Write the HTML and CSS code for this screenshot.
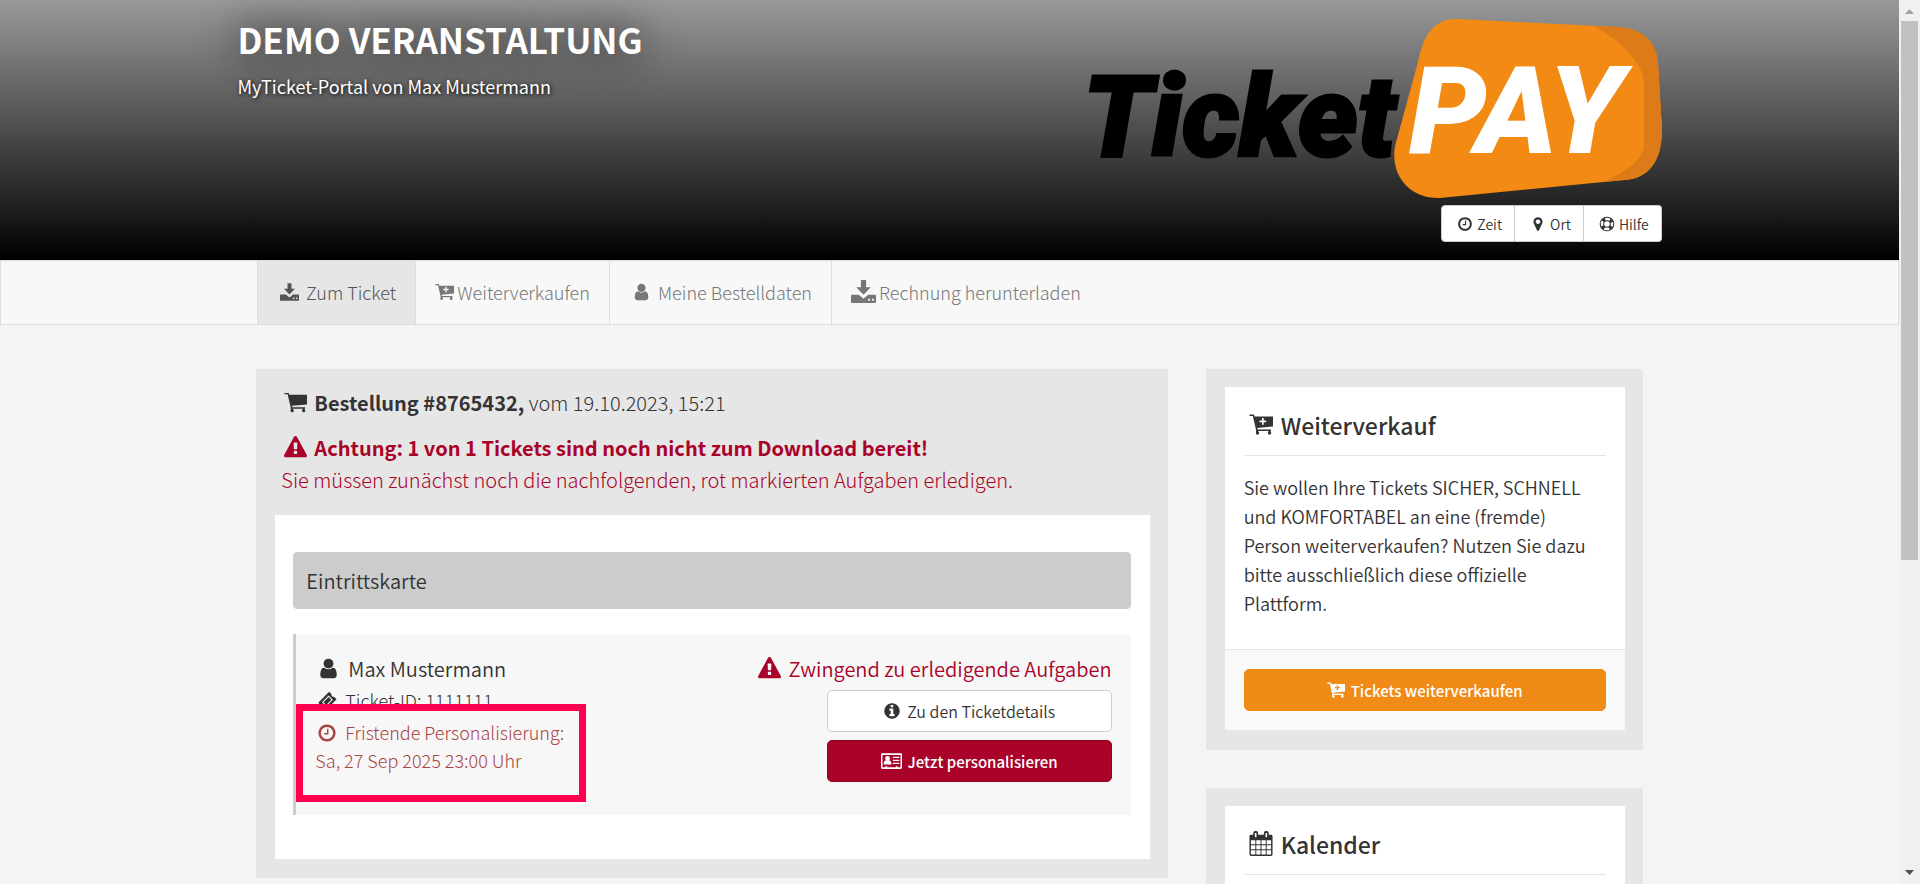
FILE: index.html
```html
<!DOCTYPE html>
<html lang="de">
<head>
    <meta charset="UTF-8">
    <meta name="viewport" content="width=device-width, initial-scale=1.0">
    <title>Demo Veranstaltung - MyTicket-Portal</title>
    <link rel="stylesheet" href="styles.css">
</head>
<body>
    <svg class="sprite" aria-hidden="true">
        <symbol id="user" viewBox="0 0 1792 1792"><path d="M1536 1399q0 109-62.5 187t-150.5 78h-854q-88 0-150.5-78t-62.5-187q0-85 8.5-160.5t31.5-152 58.5-131 94-89 134.5-34.5q131 128 313 128t313-128q76 0 134.5 34.5t94 89 58.5 131 31.5 152 8.5 160.5zm-256-887q0 159-112.5 271.5t-271.5 112.5-271.5-112.5-112.5-271.5 112.5-271.5 271.5-112.5 271.5 112.5 112.5 271.5z"/></symbol>
        <symbol id="warning" viewBox="0 0 1792 1792"><path d="M1024 1375v-190q0-14-9.5-23.5t-22.5-9.5h-192q-13 0-22.5 9.5t-9.5 23.5v190q0 14 9.5 23.5t22.5 9.5h192q13 0 22.5-9.5t9.5-23.5zm-2-374l18-459q0-12-10-19-13-11-24-11h-220q-11 0-24 11-10 7-10 21l17 457q0 10 10 16.5t24 6.5h185q14 0 23.5-6.5t10.5-16.5zm-14-934l768 1408q35 63-2 126-17 29-46.5 46t-63.5 17h-1536q-34 0-63.5-17t-46.5-46q-37-63-2-126l768-1408q17-31 47-49t65-18 65 18 47 49z"/></symbol>
        <symbol id="info" viewBox="0 0 1792 1792"><path d="M1152 1376v-160q0-14-9-23t-23-9h-96v-512q0-14-9-23t-23-9h-320q-14 0-23 9t-9 23v160q0 14 9 23t23 9h96v320h-96q-14 0-23 9t-9 23v160q0 14 9 23t23 9h448q14 0 23-9t9-23zm-128-896v-160q0-14-9-23t-23-9h-192q-14 0-23 9t-9 23v160q0 14 9 23t23 9h192q14 0 23-9t9-23zm640 416q0 209-103 385.5t-279.5 279.5-385.5 103-385.5-103-279.5-279.5-103-385.5 103-385.5 279.5-279.5 385.5-103 385.5 103 279.5 279.5 103 385.5z"/></symbol>
        <symbol id="clock" viewBox="0 0 1792 1792"><path d="M1024 544v448q0 14-9 23t-23 9h-320q-14 0-23-9t-9-23v-64q0-14 9-23t23-9h224v-352q0-14 9-23t23-9h64q14 0 23 9t9 23zm416 352q0-148-73-273t-198-198-273-73-273 73-198 198-73 273 73 273 198 198 273 73 273-73 198-198 73-273zm224 0q0 209-103 385.5t-279.5 279.5-385.5 103-385.5-103-279.5-279.5-103-385.5 103-385.5 279.5-279.5 385.5-103 385.5 103 279.5 279.5 103 385.5z"/></symbol>
        <symbol id="marker" viewBox="0 0 1792 1792"><path d="M1152 640q0-106-75-181t-181-75-181 75-75 181 75 181 181 75 181-75 75-181zm256 0q0 109-33 179l-364 774q-16 33-47.5 52t-67.5 19-67.5-19-46.5-52l-365-774q-33-70-33-179 0-212 150-362t362-150 362 150 150 362z"/></symbol>
        <symbol id="help" viewBox="0 0 24 24">
            <g fill="none" stroke="currentColor">
                <circle cx="12" cy="12" r="10.2" stroke-width="1.6"/>
                <circle cx="12" cy="12" r="5" stroke-width="1.6"/>
                <circle cx="12" cy="12" r="7.6" stroke-width="5" stroke-dasharray="4.5 7.438" stroke-dashoffset="-3.719"/>
            </g>
        </symbol>
        <symbol id="download" viewBox="0 0 24 24">
            <path d="M9.5 1h5v7h4.5l-7 7-7-7h4.500z"/>
            <path fill-rule="evenodd" d="M1 15h6.500l4.500 4 4.500-4H23q1 0 1 1v6q0 1-1 1H1q-1 0-1-1v-6q0-1 1-1zm15.500 4v1.800h1.800V19zm3.700 0v1.800H22V19z"/>
        </symbol>
        <symbol id="cart" viewBox="0 0 24 24">
            <path d="M.5 2h4.300l.8 2H24v10L8.300 15.500l.4 1.500H22v1.500H7.300L3.800 3.500H.5z"/>
            <circle cx="8.500" cy="20.500" r="1.700"/><circle cx="20.500" cy="20.500" r="1.700"/>
            <path d="M7 18h2v2H7zM19.500 18h2v2h-2z"/>
        </symbol>
        <symbol id="cart-plus" viewBox="0 0 24 24">
            <path fill-rule="evenodd" d="M.5 2h4.300l.8 2H24v10L8.300 15.500l.4 1.500H22v1.500H7.300L3.800 3.500H.5zM13 5.500V8h-2.500v1.700H13v2.500h1.700V9.700h2.500V8h-2.500V5.500z"/>
            <circle cx="8.500" cy="20.500" r="1.700"/><circle cx="20.500" cy="20.500" r="1.700"/>
            <path d="M7 18h2v2H7zM19.500 18h2v2h-2z"/>
        </symbol>
        <symbol id="ticket" viewBox="0 0 24 24">
            <path fill-rule="evenodd" d="M14.500 1l3 3q-.5 2 .8 2.700 1 .8 2.200.3l3 3L10.500 23l-3-3q.5-2-.6-2.800-1-.8-2.400-.2l-3-3zM14 5.500L6 13.500l5 5 8-8zM14 7.300l3.200 3.200-6.200 6.200-3.200-3.200z"/>
        </symbol>
        <symbol id="id-card" viewBox="0 0 24 20">
            <path fill-rule="evenodd" d="M1.500 1h21Q24 1 24 2.500v15q0 1.500-1.500 1.500h-21Q0 19 0 17.500v-15Q0 1 1.500 1zm.2 2v14H5v-1h2v1h10v-1h2v1h3.300V3z"/>
            <circle cx="7.500" cy="7" r="2.800"/><path d="M3 14q0-4.500 2.500-5h4q2.500.5 2.500 5z"/>
            <path d="M13.500 5H21v1.500h-7.500zM13.500 8.500H21V10h-7.500zM13.500 12H21v1.500h-7.500z"/>
        </symbol>
        <symbol id="calendar" viewBox="0 0 24 26">
            <path fill-rule="evenodd" d="M1.500 4H4V2q0-2 2-2h1q2 0 2 2v2h6V2q0-2 2-2h1q2 0 2 2v2h2.500Q24 4 24 5.500v19q0 1.500-1.500 1.500h-21Q0 26 0 24.500v-19Q0 4 1.500 4zM5.700 2v4.500h1.600V2zm11 0v4.500h1.600V2zM1.500 9.500v4.300h4.600V9.500zm5.600 0v4.300h4.400V9.500zm5.400 0v4.300h4.400V9.500zm5.400 0v4.300h4.600V9.500zM1.500 14.800v4.300h4.600v-4.300zm5.600 0v4.300h4.400v-4.300zm5.400 0v4.300h4.400v-4.300zm5.400 0v4.300h4.600v-4.300zM1.500 20.100v4.400h4.600v-4.400zm5.600 0v4.400h4.400v-4.400zm5.400 0v4.400h4.400v-4.400zm5.400 0v4.400h4.600v-4.400z"/>
        </symbol>
    </svg>

    <header class="hero">
        <div class="hero-inner">
            <div>
                <h1>DEMO VERANSTALTUNG</h1>
                <p>MyTicket-Portal von Max Mustermann</p>
            </div>
            <div class="hero-right">
                <svg class="logo" viewBox="0 0 574 184" role="img" aria-label="TicketPAY">
                    <path fill="#f28a13" d="M330 46C336 16 348 2 370 3L530 11C556 13 568 26 570 47L574 114C574 143 562 163 536 164L352 182C322 183 302 160 307 130z"/>
                    <path fill="#dd7b18" d="M506 10L530 11C556 13 568 26 570 47L574 114C574 143 562 163 536 164L515 166C540 155 556 143 556 128V67C556 46 528 22 506 10z"/>
                    <text class="logo-ticket" x="-5" y="140">Ticket</text>
                    <text class="logo-pay" x="321" y="137">PAY</text>
                </svg>
                <div class="btn-group">
                    <button type="button"><svg class="icon"><use href="#clock"/></svg>Zeit</button>
                    <button type="button"><svg class="icon"><use href="#marker"/></svg>Ort</button>
                    <button type="button"><svg class="icon"><use href="#help"/></svg>Hilfe</button>
                </div>
            </div>
        </div>
    </header>

    <nav class="navbar">
        <ul>
            <li class="active"><a href="#"><svg class="icon spaced"><use href="#download"/></svg>Zum Ticket</a></li>
            <li><a href="#"><svg class="icon"><use href="#cart-plus"/></svg>Weiterverkaufen</a></li>
            <li><a href="#"><svg class="icon spaced"><use href="#user"/></svg>Meine Bestelldaten</a></li>
            <li><a href="#"><svg class="icon large"><use href="#download"/></svg>Rechnung herunterladen</a></li>
        </ul>
    </nav>

    <div class="container">
        <main class="panel order">
            <div class="order-head">
                <h2><svg class="icon"><use href="#cart"/></svg><strong>Bestellung #8765432,</strong> vom 19.10.2023, 15:21</h2>
                <p class="alert-title"><svg class="icon"><use href="#warning"/></svg>Achtung: 1 von 1 Tickets sind noch nicht zum Download bereit!</p>
                <p class="alert-text">Sie müssen zunächst noch die nachfolgenden, rot markierten Aufgaben erledigen.</p>
            </div>
            <div class="box tickets">
                <h3>Eintrittskarte</h3>
                <div class="ticket">
                    <div class="ticket-info">
                        <h4><svg class="icon"><use href="#user"/></svg>Max Mustermann</h4>
                        <p><svg class="icon"><use href="#ticket"/></svg>Ticket-ID: 1111111</p>
                        <p class="deadline"><svg class="icon"><use href="#clock"/></svg>Fristende Personalisierung:<br>Sa, 27 Sep 2025 23:00 Uhr</p>
                    </div>
                    <div class="ticket-tasks">
                        <h4><svg class="icon"><use href="#warning"/></svg>Zwingend zu erledigende Aufgaben</h4>
                        <button type="button" class="btn"><svg class="icon"><use href="#info"/></svg>Zu den Ticketdetails</button>
                        <button type="button" class="btn btn-danger"><svg class="icon"><use href="#id-card"/></svg>Jetzt personalisieren</button>
                    </div>
                    <div class="highlight"></div>
                </div>
            </div>
        </main>

        <aside>
            <section class="panel">
                <div class="box">
                    <div class="box-body">
                        <h3><svg class="icon"><use href="#cart-plus"/></svg>Weiterverkauf</h3>
                        <p>Sie wollen Ihre Tickets SICHER, SCHNELL und KOMFORTABEL an eine (fremde) Person weiterverkaufen? Nutzen Sie dazu bitte ausschließlich diese offizielle Plattform.</p>
                    </div>
                    <div class="box-footer">
                        <button type="button" class="btn btn-warning"><svg class="icon"><use href="#cart-plus"/></svg>Tickets weiterverkaufen</button>
                    </div>
                </div>
            </section>
            <section class="panel">
                <div class="box">
                    <div class="box-body">
                        <h3><svg class="icon"><use href="#calendar"/></svg>Kalender</h3>
                    </div>
                </div>
            </section>
        </aside>
    </div>

    <div class="scrollbar">
        <svg viewBox="0 0 9 5"><path fill="#a3a3a3" d="M0 5L4.500 0 9 5z"/></svg>
        <div class="track"><div class="thumb"></div></div>
        <svg viewBox="0 0 9 5"><path fill="#505050" d="M0 0h9L4.500 5z"/></svg>
    </div>
</body>
</html>
```
FILE: styles.css
```css
* { box-sizing: border-box; }
body {
    margin: 0;
    padding-right: 21px;
    height: 100vh;
    overflow: hidden;
    background-color: #f4f4f4;
    color: #333;
    font-family: "Noto Sans CJK SC", sans-serif;
    font-size: 18px;
    font-weight: 350;
    line-height: 28px;
}
h1, h2, h3, h4, p, ul { margin: 0; padding: 0; font-weight: 350; }
button { font-family: inherit; font-weight: 350; cursor: pointer; }
.sprite { position: absolute; width: 0; height: 0; }
.icon {
    width: 20px;
    height: 20px;
    flex-shrink: 0;
    fill: currentColor;
    vertical-align: -3px;
}

/* Header */
.hero { background: linear-gradient(#999, #000); color: #fff; }
.hero-inner {
    display: flex;
    justify-content: space-between;
    width: 75%;
    height: 260px;
    margin: 0 auto;
    padding-top: 16px;
}
.hero h1 {
    font-size: 35px;
    font-weight: 700;
    line-height: 46px;
    text-shadow: 0 0 40px #000;
}
.hero p {
    margin-top: 9px;
    font-size: 18px;
    font-weight: 400;
    line-height: 30px;
    text-shadow: 1px 1px 4px #000;
}
.hero-right {
    display: flex;
    flex-direction: column;
    align-items: flex-end;
    gap: 5px;
}
.logo { width: 574px; height: 184px; overflow: visible; }
.logo text { font-family: Roboto, sans-serif; font-weight: 900; font-style: italic; }
.logo-ticket { font-size: 113px; stroke: #000; stroke-width: 3px; }
.logo-pay { font-size: 123px; fill: #fff; }
.btn-group { display: flex; }
.btn-group button {
    display: flex;
    align-items: center;
    gap: 4px;
    height: 37px;
    padding: 0 12px 0 15px;
    border: 1px solid #ccc;
    border-left-width: 0;
    background-color: #fff;
    color: #333;
    font-size: 14px;
}
.btn-group button:first-child { border-left-width: 1px; border-radius: 4px 0 0 4px; }
.btn-group button:last-child { border-radius: 0 4px 4px 0; }
.btn-group .icon { width: 16px; height: 16px; }

/* Navigation */
.navbar { border: 1px solid #ddd; background-color: #f8f8f8; }
.navbar ul {
    display: flex;
    width: 73%;
    margin: 0 auto;
    list-style: none;
}
.navbar li { border-right: 1px solid #ddd; }
.navbar li:last-child { border-right: 0; }
.navbar .active { border-left: 1px solid #ddd; background-color: #e6e6e6; }
.navbar a {
    display: flex;
    align-items: center;
    gap: 3px;
    height: 63px;
    padding: 0 19px 2px;
    color: #777;
    font-weight: 200;
    text-decoration: none;
}
.navbar .active a { color: #555; }
.navbar .icon { width: 19px; }
.navbar .spaced { margin: 0 4px 0 3px; }
.navbar .large { width: 25px; height: 25px; }

/* Content */
.container {
    display: flex;
    align-items: flex-start;
    gap: 38px;
    width: 73%;
    margin: 44px auto 0;
}
.panel { padding: 18px 18px 20px 19px; background-color: #e6e6e6; }
.order { flex: 1; padding-bottom: 19px; }
aside { width: 437px; }
aside .panel { margin-bottom: 38px; }
.box { background-color: #fff; }
.order-head { padding: 0 6px 19px; font-size: 20px; line-height: 32px; }
.order-head h2 { font-size: 20px; font-weight: 200; }
.order-head strong { font-weight: 700; }
.order-head .icon { width: 23px; height: 23px; margin: 0 7px 0 3px; }
.alert-title { margin-top: 13px; color: #a90329; font-weight: 700; }
.alert-text { color: #a90329; font-weight: 200; }

.tickets { padding: 37px 19px 44px 18px; }
.tickets h3 {
    padding: 12px;
    border: 1px solid #ccc;
    border-radius: 4px;
    background-color: #ccc;
    font-size: 20px;
    line-height: 31px;
}
.ticket {
    position: relative;
    display: flex;
    justify-content: space-between;
    min-height: 181px;
    margin-top: 25px;
    padding: 19px;
    border-left: 3px solid #ccc;
    background-color: #f7f7f7;
}
.ticket h4 { font-size: 20px; line-height: 32px; }
.ticket-info p { margin-top: 1px; font-weight: 200; }
.ticket-info h4 .icon { width: 23px; height: 23px; margin: 0 8px 0 2px; }
.ticket-info p .icon { margin: 0 8px 0 2px; }
.ticket-info .deadline { margin-top: 4px; color: #a94442; }
.ticket-tasks { display: flex; flex-direction: column; align-items: flex-end; }
.ticket-tasks h4 { color: #a90329; }
.ticket-tasks h4 .icon { width: 23px; height: 23px; margin-right: 8px; }
.ticket-tasks .btn { width: 285px; margin-top: 5px; }
.ticket-tasks .btn + .btn { margin-top: 8px; }
.highlight {
    position: absolute;
    top: 70px;
    left: 0;
    width: 290px;
    height: 98px;
    border: 7px solid #ff0050;
}

.btn {
    display: flex;
    align-items: center;
    justify-content: center;
    gap: 6px;
    height: 42px;
    border: 1px solid #ccc;
    border-radius: 5px;
    background-color: #fff;
    color: #333;
    font-size: 16px;
}
.btn .icon { width: 18px; height: 18px; }
.btn-danger { border-color: #900323; background-color: #a90329; color: #fff; font-size: 15px; font-weight: 500; }
.btn-danger .icon { width: 21px; }
.btn-warning { width: 100%; border-color: #ef8b17; background-color: #f08b17; color: #fff; font-size: 15px; font-weight: 500; }

.box-body { padding: 19px 19px 31px; }
.box-body h3 {
    display: flex;
    align-items: center;
    gap: 8px;
    height: 50px;
    padding: 0 0 12px 5px;
    border-bottom: 1px solid #e5e5e5;
    font-size: 23px;
    font-weight: 500;
}
.box-body .icon { width: 24px; height: 25px; }
.box-body p { margin-top: 17px; line-height: 29px; }
.box-footer { padding: 19px; border-top: 1px solid #e5e5e5; background-color: #f9f9f9; }

/* Scrollbar at the window's edge */
.scrollbar {
    position: fixed;
    top: 0;
    right: 0;
    bottom: 0;
    display: flex;
    flex-direction: column;
    align-items: center;
    width: 21px;
    padding: 9px 0;
    background-color: #f0f0f0;
}
.scrollbar svg { width: 9px; height: 5px; }
.track { flex: 1; width: 17px; padding: 7px 0; }
.thumb { height: 64%; background-color: #c1c1c1; }
```
